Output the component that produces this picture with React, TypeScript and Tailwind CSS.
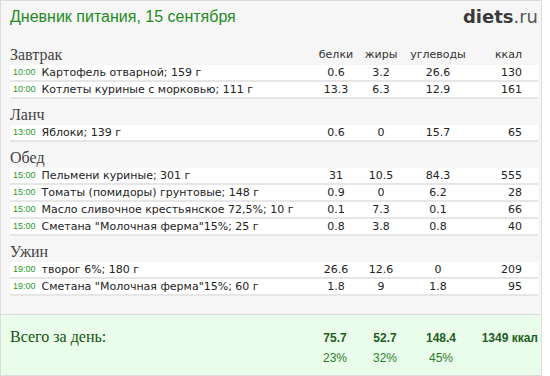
import React from 'react';

type Item = { time: string; name: string; p: string; f: string; c: string; kcal: string };
type Meal = { title: string; items: Item[] };

const meals: Meal[] = [
  {
    title: 'Завтрак',
    items: [
      { time: '10:00', name: 'Картофель отварной; 159 г', p: '0.6', f: '3.2', c: '26.6', kcal: '130' },
      { time: '10:00', name: 'Котлеты куриные с морковью; 111 г', p: '13.3', f: '6.3', c: '12.9', kcal: '161' },
    ],
  },
  {
    title: 'Ланч',
    items: [{ time: '13:00', name: 'Яблоки; 139 г', p: '0.6', f: '0', c: '15.7', kcal: '65' }],
  },
  {
    title: 'Обед',
    items: [
      { time: '15:00', name: 'Пельмени куриные; 301 г', p: '31', f: '10.5', c: '84.3', kcal: '555' },
      { time: '15:00', name: 'Томаты (помидоры) грунтовые; 148 г', p: '0.9', f: '0', c: '6.2', kcal: '28' },
      { time: '15:00', name: 'Масло сливочное крестьянское 72,5%; 10 г', p: '0.1', f: '7.3', c: '0.1', kcal: '66' },
      { time: '15:00', name: 'Сметана "Молочная ферма"15%; 25 г', p: '0.8', f: '3.8', c: '0.8', kcal: '40' },
    ],
  },
  {
    title: 'Ужин',
    items: [
      { time: '19:00', name: 'творог 6%; 180 г', p: '26.6', f: '12.6', c: '0', kcal: '209' },
      { time: '19:00', name: 'Сметана "Молочная ферма"15%; 60 г', p: '1.8', f: '9', c: '1.8', kcal: '95' },
    ],
  },
];

const cols = 'grid grid-cols-[1fr_42px_48px_66px_67px]';

const MealHeader: React.FC<{ title: string; labels?: boolean }> = ({ title, labels }) => (
  <div className={`${cols} h-[26px] items-end`}>
    <div className="pb-[1px] font-['Liberation_Serif',serif] text-[16px] leading-[18px] text-[#444]">{title}</div>
    {labels && (
      <>
        <div className="pb-[4px] text-center text-[11px] leading-[13px] text-[#333]">белки</div>
        <div className="pb-[4px] text-center text-[11px] leading-[13px] text-[#333]">жиры</div>
        <div className="pb-[4px] text-center text-[11px] leading-[13px] text-[#333]">углеводы</div>
        <div className="pb-[4px] pr-[16px] text-right text-[11px] leading-[13px] text-[#333]">ккал</div>
      </>
    )}
  </div>
);

const Row: React.FC<{ item: Item }> = ({ item }) => (
  <div className={`${cols} h-[17px] items-center border-b-2 border-[#e6e6e6] bg-white text-[11px] leading-[15px] text-[#222]`}>
    <div className="flex items-center whitespace-nowrap pl-[3px]">
      <span className="mr-[6px] font-['Liberation_Sans',sans-serif] text-[9px] text-[#1f9a1f]">{item.time}</span>
      <span>{item.name}</span>
    </div>
    <div className="text-center">{item.p}</div>
    <div className="text-center">{item.f}</div>
    <div className="text-center">{item.c}</div>
    <div className="pr-[16px] text-right">{item.kcal}</div>
  </div>
);

export default function App() {
  return (
    <div className="flex h-[376px] w-[542px] flex-col border border-[#dcdcdc] bg-[#f6f6f6] font-['DejaVu_Sans',sans-serif]">
      <div className="flex flex-1 flex-col pl-[9px] pr-[3px]">
        <div className="flex h-[38px] items-start justify-between">
          <div className="mt-[7px] font-['Liberation_Sans',sans-serif] text-[16px] leading-[18px] text-[#228b22]">
            Дневник питания, 15 сентября
          </div>
          <div className="mt-[6px] text-[18px] leading-[20px] text-[#555]">
            <span className="font-bold text-[#3a3a3a]">diets</span>.ru
          </div>
        </div>
        {meals.map((meal, i) => (
          <div key={meal.title}>
            <MealHeader title={meal.title} labels={i === 0} />
            {meal.items.map((item, j) => (
              <Row key={j} item={item} />
            ))}
          </div>
        ))}
      </div>
      <div className="h-[61px] border-t border-[#dcdcdc] bg-[#eafdea] pl-[9px] pr-[3px]">
        <div className="grid grid-cols-[1fr_44px_56px_56px_69px] pt-[13px] font-['Liberation_Sans',sans-serif]">
          <div className="font-['Liberation_Serif',serif] text-[16px] leading-[18px] text-[#125512]">Всего за день:</div>
          <div className="pt-[2px] text-center text-[12px] font-bold leading-[16px] text-[#1d5e1d]">75.7</div>
          <div className="pt-[2px] text-center text-[12px] font-bold leading-[16px] text-[#1d5e1d]">52.7</div>
          <div className="pt-[2px] text-center text-[12px] font-bold leading-[16px] text-[#1d5e1d]">148.4</div>
          <div className="pt-[2px] text-right text-[12px] font-bold leading-[16px] text-[#1d5e1d]">1349 ккал</div>
          <div />
          <div className="pt-[4px] text-center text-[12px] leading-[16px] text-[#2d7d2d]">23%</div>
          <div className="pt-[4px] text-center text-[12px] leading-[16px] text-[#2d7d2d]">32%</div>
          <div className="pt-[4px] text-center text-[12px] leading-[16px] text-[#2d7d2d]">45%</div>
          <div />
        </div>
      </div>
    </div>
  );
}
